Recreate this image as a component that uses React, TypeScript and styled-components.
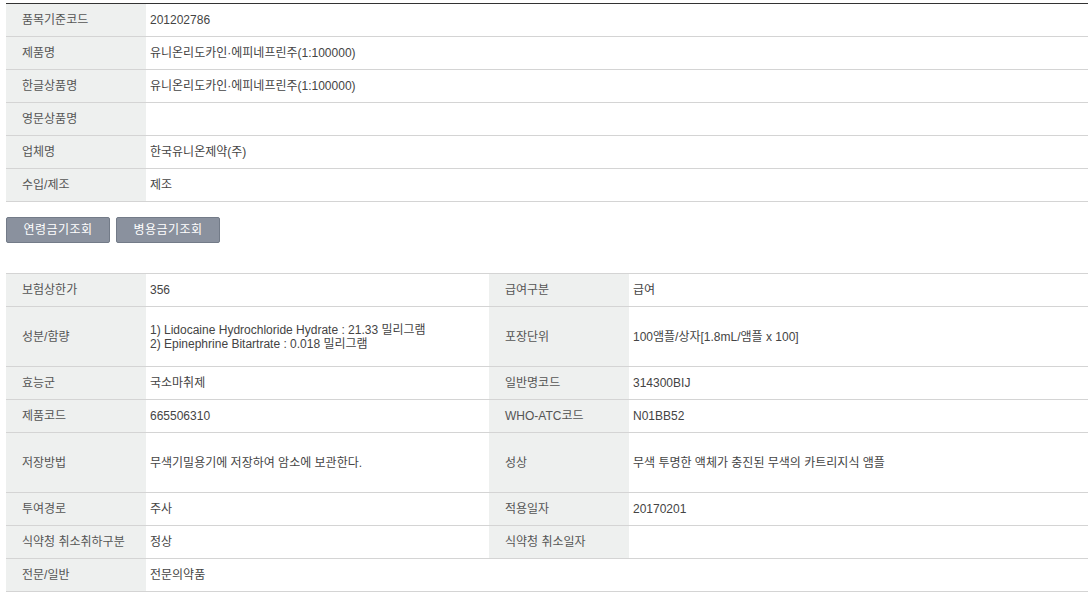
import React from 'react';
import styled, { createGlobalStyle } from 'styled-components';

const GlobalStyle = createGlobalStyle`
  body {
    margin: 0;
    background: #ffffff;
    font-family: "Liberation Sans", "Noto Sans CJK KR", sans-serif;
    font-size: 12px;
    color: #444;
  }
`;

const Page = styled.div`
  padding: 3px 0 0 6px;
  width: 1082px;
`;

const InfoTable = styled.table<{ $strong?: boolean }>`
  width: 100%;
  border-collapse: collapse;
  table-layout: fixed;
  border-top: 1px solid ${({ $strong }) => ($strong ? '#333' : '#d4d4d4')};
`;

const Row = styled.tr<{ $tall?: boolean }>`
  height: ${({ $tall }) => ($tall ? 60 : 33)}px;
  border-bottom: 1px solid #d4d4d4;
`;

const Label = styled.th`
  background: #eef0ef;
  color: #555;
  font-weight: normal;
  text-align: left;
  padding: 0 0 0 16px;
  vertical-align: middle;
  line-height: 14px;
  white-space: nowrap;
`;

const Value = styled.td`
  color: #444;
  padding: 0 0 0 4px;
  vertical-align: middle;
  line-height: 14px;
`;

const ButtonBar = styled.div`
  display: flex;
  gap: 6px;
  margin: 15px 0 30px;
`;

const GreyButton = styled.button`
  width: 104px;
  height: 26px;
  background: #8a919e;
  border: 1px solid #737b88;
  border-radius: 2px;
  color: #ffffff;
  font-family: "Liberation Sans", "Noto Sans CJK KR", sans-serif;
  font-size: 12px;
  line-height: 14px;
  letter-spacing: 0.5px;
  padding: 0;
  cursor: pointer;
`;

const basicRows: [string, string][] = [
  ['품목기준코드', '201202786'],
  ['제품명', '유니온리도카인·에피네프린주(1:100000)'],
  ['한글상품명', '유니온리도카인·에피네프린주(1:100000)'],
  ['영문상품명', ''],
  ['업체명', '한국유니온제약(주)'],
  ['수입/제조', '제조'],
];

interface PairRow {
  l1: string;
  v1: React.ReactNode;
  l2: string;
  v2: string;
  tall?: boolean;
}

const pairRows: PairRow[] = [
  { l1: '보험상한가', v1: '356', l2: '급여구분', v2: '급여' },
  {
    l1: '성분/함량',
    v1: (
      <>
        1) Lidocaine Hydrochloride Hydrate : 21.33 밀리그램
        <br />
        2) Epinephrine Bitartrate : 0.018 밀리그램
      </>
    ),
    l2: '포장단위',
    v2: '100앰플/상자[1.8mL/앰플 x 100]',
    tall: true,
  },
  { l1: '효능군', v1: '국소마취제', l2: '일반명코드', v2: '314300BIJ' },
  { l1: '제품코드', v1: '665506310', l2: 'WHO-ATC코드', v2: 'N01BB52' },
  {
    l1: '저장방법',
    v1: '무색기밀용기에 저장하여 암소에 보관한다.',
    l2: '성상',
    v2: '무색 투명한 액체가 충진된 무색의 카트리지식 앰플',
    tall: true,
  },
  { l1: '투여경로', v1: '주사', l2: '적용일자', v2: '20170201' },
  { l1: '식약청 취소취하구분', v1: '정상', l2: '식약청 취소일자', v2: '' },
];

const App: React.FC = () => {
  return (
    <Page>
      <GlobalStyle />
      <InfoTable $strong>
        <colgroup>
          <col style={{ width: 140 }} />
          <col />
        </colgroup>
        <tbody>
          {basicRows.map(([label, value]) => (
            <Row key={label}>
              <Label>{label}</Label>
              <Value>{value}</Value>
            </Row>
          ))}
        </tbody>
      </InfoTable>

      <ButtonBar>
        <GreyButton>연령금기조회</GreyButton>
        <GreyButton>병용금기조회</GreyButton>
      </ButtonBar>

      <InfoTable>
        <colgroup>
          <col style={{ width: 140 }} />
          <col style={{ width: 343 }} />
          <col style={{ width: 140 }} />
          <col />
        </colgroup>
        <tbody>
          {pairRows.map((row) => (
            <Row key={row.l1} $tall={row.tall}>
              <Label>{row.l1}</Label>
              <Value>{row.v1}</Value>
              <Label>{row.l2}</Label>
              <Value>{row.v2}</Value>
            </Row>
          ))}
          <Row>
            <Label>전문/일반</Label>
            <Value colSpan={3}>전문의약품</Value>
          </Row>
        </tbody>
      </InfoTable>
    </Page>
  );
};

export default App;
